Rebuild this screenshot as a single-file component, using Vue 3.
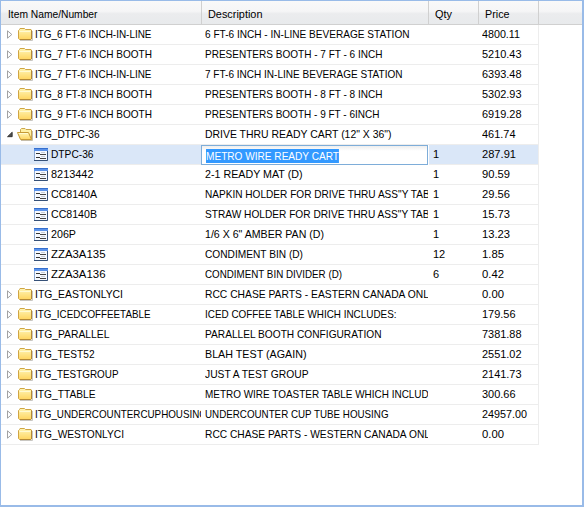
<script setup>
import { ref } from 'vue'

// Each row: name, description, quantity, price, kind, name width, description width, price width
const rows = ref([
  ['ITG_6 FT-6 INCH-IN-LINE', '6 FT-6 INCH - IN-LINE BEVERAGE STATION', '', '4800.11', 'closed', 116.5, 204.5, 38],
  ['ITG_7 FT-6 INCH BOOTH', 'PRESENTERS BOOTH - 7 FT - 6 INCH', '', '5210.43', 'closed', 117, 177.5, 39.5],
  ['ITG_7 FT-6 INCH-IN-LINE', '7 FT-6 INCH IN-LINE BEVERAGE STATION', '', '6393.48', 'closed', 116.5, 197.5, 39.5],
  ['ITG_8 FT-8 INCH BOOTH', 'PRESENTERS BOOTH - 8 FT - 8 INCH', '', '5302.93', 'closed', 117, 177.5, 39.5],
  ['ITG_9 FT-6 INCH BOOTH', 'PRESENTERS BOOTH - 9 FT - 6INCH', '', '6919.28', 'closed', 117, 174.5, 39.5],
  ['ITG_DTPC-36', 'DRIVE THRU READY CART (12" X 36")', '', '461.74', 'open', 64.5, 186.5, 33.5],
  ['DTPC-36', 'METRO WIRE READY CART', '1', '287.91', 'item', 42.5, 133, 34],
  ['8213442', '2-1 READY MAT (D)', '1', '90.59', 'item', 42.5, 97.5, 28],
  ['CC8140A', 'NAPKIN HOLDER FOR DRIVE THRU ASS"Y TABLE', '1', '29.56', 'item', 46, 237, 28],
  ['CC8140B', 'STRAW HOLDER FOR DRIVE THRU ASS"Y TABLE', '1', '15.73', 'item', 46, 237, 28],
  ['206P', '1/6 X 6" AMBER PAN (D)', '1', '13.23', 'item', 25, 119, 28],
  ['ZZA3A135', 'CONDIMENT BIN (D)', '12', '1.85', 'item', 54.5, 98, 22],
  ['ZZA3A136', 'CONDIMENT BIN DIVIDER (D)', '6', '0.42', 'item', 54.5, 137, 22],
  ['ITG_EASTONLYCI', 'RCC CHASE PARTS - EASTERN CANADA ONLY', '', '0.00', 'closed', 88, 230, 22],
  ['ITG_ICEDCOFFEETABLE', 'ICED COFFEE TABLE WHICH INCLUDES:', '', '179.56', 'closed', 115.5, 191.5, 33.5],
  ['ITG_PARALLEL', 'PARALLEL BOOTH CONFIGURATION', '', '7381.88', 'closed', 74.5, 176.5, 39.5],
  ['ITG_TEST52', 'BLAH TEST (AGAIN)', '', '2551.02', 'closed', 59.5, 101.5, 39.5],
  ['ITG_TESTGROUP', 'JUST A TEST GROUP', '', '2141.73', 'closed', 83.5, 103.5, 39.5],
  ['ITG_TTABLE', 'METRO WIRE TOASTER TABLE WHICH INCLUDES', '', '300.66', 'closed', 60.5, 237, 33.5],
  ['ITG_UNDERCOUNTERCUPHOUSING', 'UNDERCOUNTER CUP TUBE HOUSING', '', '24957.00', 'closed', 172, 183.5, 45],
  ['ITG_WESTONLYCI', 'RCC CHASE PARTS - WESTERN CANADA ONLY', '', '0.00', 'closed', 89, 231, 22],
].map(([name, desc, qty, price, kind, nameW, descW, priceW]) => ({ name, desc, qty, price, kind, nameW, descW, priceW })))

const selected = ref(6)

// Condenses a label horizontally to the given width
const vFit = {
  mounted(el, { value }) {
    el.style.transform = `scaleX(${value / el.getBoundingClientRect().width})`
  },
}
</script>

<template>
  <main class="panel">
    <header class="grid head">
      <div><span v-fit="89.5" class="fit">Item Name/Number</span></div>
      <div><span v-fit="54.5" class="fit">Description</span></div>
      <div><span v-fit="17" class="fit">Qty</span></div>
      <div><span v-fit="24.5" class="fit">Price</span></div>
      <div class="rest"></div>
    </header>
    <div v-for="(row, i) in rows" :key="i" class="grid row" :class="{ selected: i === selected }">
      <div class="cell tree" :class="row.kind">
        <svg v-if="row.kind !== 'item'" class="arrow" width="9" height="11" viewBox="0 0 9 11">
          <path v-if="row.kind === 'closed'" d="M1.5 1.8v7.4L5.8 5.5z" fill="#fff" stroke="#a2a2a2" />
          <path v-else d="M6.2 3.2v4.5H1.5z" fill="#505050" stroke="#222" stroke-width=".8" />
        </svg>
        <svg v-if="row.kind === 'closed'" class="icon" width="16" height="16" viewBox="0 0 16 16">
          <path d="M2 13.5h12.5V4" fill="none" stroke="#c9c7c2" />
          <path d="M.5 11.5v-8l1-1 .5-1h4.5l1 1h5.5l.5.5v8.5l-1 1h-11z" fill="url(#folder)" stroke="#cfa544" />
          <path d="M1.5 4.5h11" stroke="#fffad2" />
          <path d="M13.5 3.5v8.5l-1 .5H2" fill="none" stroke="#b58a35" />
        </svg>
        <svg v-else-if="row.kind === 'open'" class="icon" width="16" height="16" viewBox="0 0 16 16">
          <path d="M2.5 11.5v-9l1-1H7l1 1h5l.5.5v9z" fill="#fff0a5" stroke="#caa64d" />
          <path d="M-.5 5.5h11l3 7h-11z" fill="url(#folder)" stroke="#c79a35" />
          <path d="M3 13.5h11.5V4" fill="none" stroke="#c5bda9" />
          <path d="M.7 6.5h9.2" stroke="#fffbd0" />
        </svg>
        <svg v-else class="icon" width="16" height="16" viewBox="0 0 16 16">
          <path d="M.5 1.5h13v12h-13z" fill="#f5f9ff" stroke="#8ca9d3" />
          <path d="M0 1h14v3H0z" fill="#5a92ea" />
          <path d="M0 1.5h14" stroke="#356fce" />
          <path d="M13.5 4v9.5H0" fill="none" stroke="#365178" />
          <path d="M2 6.5h4M2 10.5h4" stroke="#333" />
          <path d="M7 5.5h4M7 9.5h4" stroke="#c9ced6" />
          <path d="M6 7.5h6M6 11.5h6" stroke="#444" />
        </svg>
        <div class="label"><span v-fit="row.nameW" class="fit">{{ row.name }}</span></div>
      </div>
      <div v-if="i === selected" class="editor"><span v-fit="row.descW" class="fit">{{ row.desc }}</span></div>
      <div v-else class="cell desc"><div class="clip"><span v-fit="row.descW" class="fit">{{ row.desc }}</span></div></div>
      <div class="cell qty">{{ row.qty }}</div>
      <div class="cell price"><span v-fit="row.priceW" class="fit">{{ row.price }}</span></div>
    </div>
    <svg class="defs" width="0" height="0">
      <defs>
        <linearGradient id="folder" x1="0" y1="0" x2="0" y2="1">
          <stop offset="0" stop-color="#fff6b8" />
          <stop offset="1" stop-color="#ffd55f" />
        </linearGradient>
      </defs>
    </svg>
  </main>
</template>

<style>
body { margin: 0; background: #fff; }
</style>

<style scoped>
.panel {
  box-sizing: border-box;
  width: 584px;
  height: 507px;
  overflow: hidden;
  border: solid #99bbe8;
  border-width: 1px 2px 2px 1px;
  background: #fff;
  color: #000;
  font: 11px/13px "Liberation Sans", Arial, sans-serif;
  white-space: nowrap;
}
.fit { display: inline-block; transform-origin: 0 50%; vertical-align: top; }
.grid { display: grid; grid-template-columns: 201px 227px 50px 60px 1fr; }
.head {
  height: 24px;
  box-sizing: border-box;
  border-bottom: 1px solid #d0d0d0;
  background: linear-gradient(#f9f9f9, #f5f5f6 45%, #ebecee 55%, #e8eaec);
}
.head div { padding: 7px 0 0 6px; border-right: 1px solid #d0d0d0; }
.head div:first-child { padding-left: 7px; }
.head .rest { border: 0; }
.row { height: 20px; grid-template-columns: 201px 227px 50px 60px; width: 538px; }
.cell {
  box-sizing: border-box;
  overflow: hidden;
  min-width: 0;
  height: 20px;
  padding: 3px 0 0 4px;
  border-bottom: 1px solid #ededed;
}
.price { padding-left: 3px; border-right: 1px solid #ededed; }
.selected .cell { background: #dae7f8; }
.tree { display: flex; padding: 0 1px 0 5px; }
.tree.item { padding-left: 33px; }
.arrow { flex: none; margin: 4px 3px 0 0; }
.icon { flex: none; margin-top: 2px; overflow: visible; }
.label { flex: 1; min-width: 0; overflow: hidden; padding: 3px 0 0 1px; }
.desc { padding-left: 3px; padding-right: 1px; }
.clip { overflow: hidden; }
.editor {
  box-sizing: border-box;
  height: 20px;
  margin: 0 1px 0 -1px;
  padding: 3px 4px;
  border: 1px solid #7eadd9;
  background: linear-gradient(#eee, #fff 5px);
}
.editor span { height: 14px; line-height: 14px; background: #3399ff; color: #fff; }
</style>
